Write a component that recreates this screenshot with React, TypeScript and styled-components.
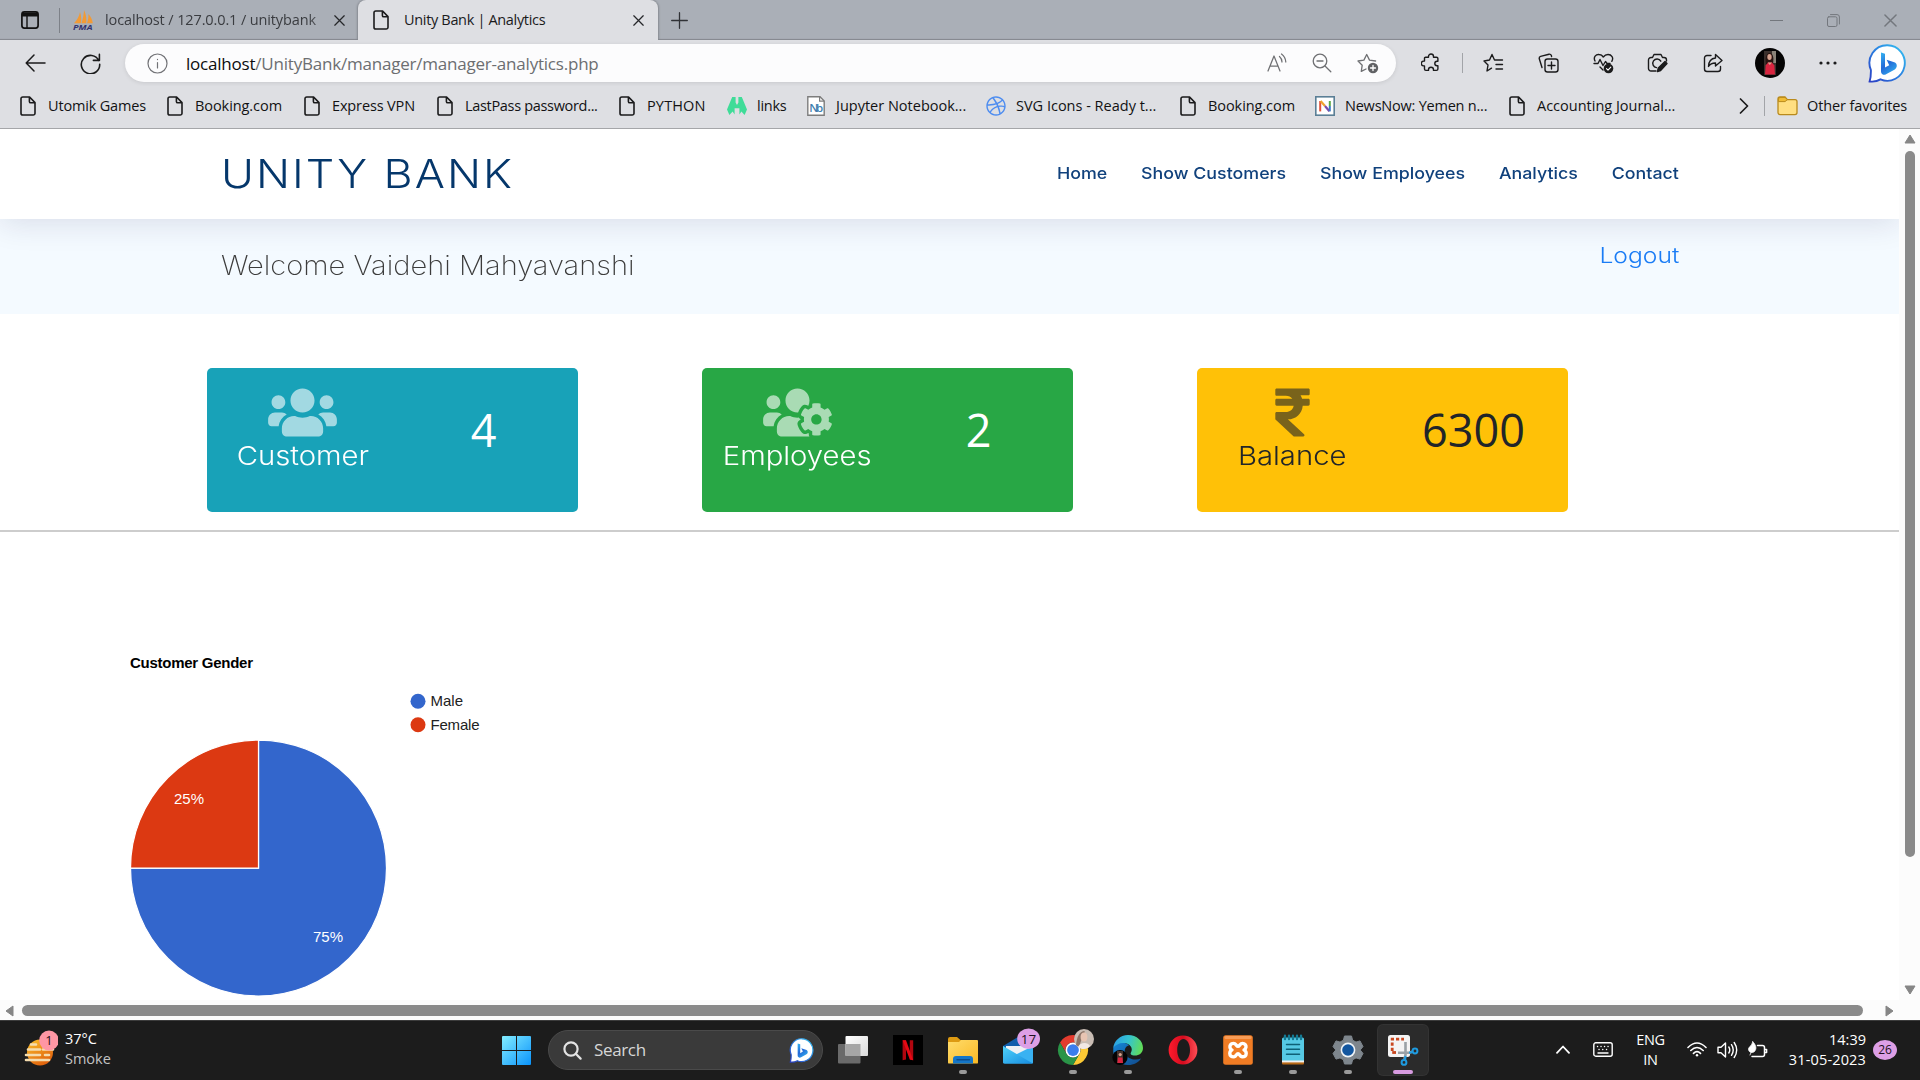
import React from "react";
import styled, { createGlobalStyle } from "styled-components";
import { FaUsers, FaUsersCog, FaRupeeSign, FaDribbble } from "react-icons/fa";

const Global = createGlobalStyle`
  * { box-sizing: border-box; }
  html, body { margin: 0; padding: 0; background: #fff; overflow: hidden; }
  svg { display: block; flex: none; }
`;

const ui = `"Open Sans", "Noto Sans", sans-serif`;
const brand = `Inter, "Open Sans", sans-serif`;

const Screen = styled.div`
  width: 1920px;
  height: 1080px;
  display: flex;
  flex-direction: column;
  overflow: hidden;
  font-family: ${ui};
`;

/* ---------- browser chrome ---------- */
const TabStrip = styled.div`
  height: 40px;
  display: flex;
  align-items: stretch;
  background: #aaafb7;
  box-shadow: inset 0 -2px 1px -1px #83878d;
`;
const StripStart = styled.div`
  width: 60px;
  padding: 0 0 0 21px;
  display: flex;
  align-items: center;
  justify-content: space-between;
`;
const StripRule = styled.i`
  width: 1px;
  height: 25px;
  background: #7d8188;
`;
const ToolRule = styled(StripRule)`
  height: 20px;
  background: #a2a4a8;
`;
const Tab = styled.div<{ $active?: boolean; $width: number }>`
  width: ${(p) => p.$width}px;
  padding: 0 ${(p) => (p.$active ? 14 : 13)}px 0 ${(p) => (p.$active ? 15 : 13)}px;
  display: flex;
  align-items: center;
  border-radius: 8px 8px 0 0;
  background: ${(p) => (p.$active ? "#dedfe3" : "transparent")};
  box-shadow: ${(p) => (p.$active ? "0 0 2px 1px #858990" : "none")};
  clip-path: ${(p) => (p.$active ? "inset(0 -3px 0 -3px)" : "none")};
`;
const TabTitle = styled.span<{ $active?: boolean }>`
  flex: 1;
  margin-left: ${(p) => (p.$active ? 15 : 11)}px;
  overflow: hidden;
  white-space: nowrap;
  font-size: 14.5px;
  line-height: 20px;
  letter-spacing: ${(p) => (p.$active ? -0.33 : -0.12)}px;
  color: ${(p) => (p.$active ? "#1b1b1c" : "#3a3c40")};
  mask-image: ${(p) => (p.$active ? "none" : "linear-gradient(90deg, #000 88%, rgba(0, 0, 0, 0.35))")};
`;
const StripEnd = styled.div`
  flex: 1;
  display: flex;
  align-items: center;
  padding: 0 23px 0 13px;
  gap: 44px;
`;
const Grow = styled.span`
  flex: 1;
`;
const Toolbar = styled.div`
  height: 46px;
  display: flex;
  align-items: center;
  background: #dedfe3;
`;
const NavButtons = styled.div`
  width: 125px;
  padding-left: 25px;
  display: flex;
  gap: 34px;
  align-items: center;
`;
const AddressBar = styled.div`
  width: 1271px;
  height: 38px;
  margin-right: 4px;
  padding: 0 17px 0 22px;
  display: flex;
  align-items: center;
  border-radius: 19px;
  background: #fcfcfd;
  box-shadow: 0 1px 4px rgba(0, 0, 0, 0.1);
`;
const Url = styled.span`
  flex: 1;
  margin-left: 18px;
  padding-top: 1px;
  font-size: 17px;
  line-height: 24px;
  letter-spacing: -0.21px;
  color: #6c6e71;
  b {
    font-weight: 400;
    color: #0c0c0d;
  }
`;
const AddressIcons = styled.div`
  display: flex;
  align-items: center;
  gap: 25px;
`;
const Actions = styled.div`
  flex: 1;
  display: flex;
  align-items: center;
`;
const Action = styled.span<{ $w: number }>`
  width: ${(p) => p.$w}px;
  display: flex;
  justify-content: center;
`;
const Bookmarks = styled.div`
  height: 43px;
  padding: 0 13px 3px 18px;
  display: flex;
  align-items: center;
  background: #dedfe3;
  border-bottom: 1px solid #a5a6a9;
`;
const Bookmark = styled.div<{ $w?: number; $ls: number }>`
  width: ${(p) => (p.$w ? `${p.$w}px` : "auto")};
  display: flex;
  align-items: center;
  gap: ${(p) => (p.$w ? 10 : 9)}px;
  white-space: nowrap;
  font-size: 14.5px;
  line-height: 20px;
  letter-spacing: ${(p) => p.$ls}px;
  color: #121213;
`;
const FolderLink = styled.div`
  margin-left: 12px;
`;
const IconSlot = styled.span`
  width: 20px;
  display: flex;
  justify-content: center;
`;

/* ---------- page ---------- */
const Window = styled.div`
  height: 891px;
  display: grid;
  grid-template-columns: 1899px 21px;
  grid-template-rows: 871px 20px;
  background: #fcfcfc;
`;
const Page = styled.main`
  background: #fff;
  overflow: hidden;
`;
const Header = styled.header`
  position: relative;
  z-index: 1;
  height: 90px;
  padding: 0 220px 0 221px;
  display: flex;
  align-items: center;
  justify-content: space-between;
  background: #fff;
  box-shadow: 0 5px 30px rgba(30, 26, 84, 0.12);
`;
const Logo = styled.h1`
  margin: 0;
  font-family: ${brand};
  font-size: 40px;
  line-height: 50px;
  font-weight: 300;
  letter-spacing: 1.8px;
  transform: scaleX(1.12);
  transform-origin: left;
  color: #05376b;
`;
const Nav = styled.nav`
  display: flex;
  gap: 31.3px;
  margin-bottom: 2px;
  font-family: ${brand};
  font-size: 16.5px;
  line-height: 24px;
  font-weight: 500;
  transform: scaleX(1.08);
  transform-origin: right;
  color: #10417c;
`;
const Band = styled.section`
  height: 95px;
  padding: 0 220px 0 221px;
  display: flex;
  justify-content: space-between;
  background: #f4faff;
  font-family: ${brand};
`;
const Welcome = styled.h2`
  margin: 27px 0 0;
  font-size: 27px;
  line-height: 40px;
  font-weight: 200;
  transform: scaleX(1.077);
  transform-origin: left;
  color: #3c3c3c;
`;
const Logout = styled.a`
  margin-top: 20px;
  font-size: 22px;
  line-height: 32px;
  font-weight: 300;
  transform: scaleX(1.12);
  transform-origin: right;
  color: #1a7cf5;
`;
const Cards = styled.section`
  margin-top: 54px;
  padding-left: 207px;
  display: flex;
  gap: 124px;
`;
const Card = styled.article<{ $bg: string; $fg: string }>`
  width: 371px;
  height: 144px;
  display: grid;
  grid-template-columns: 191px 171px;
  border-radius: 5px;
  background: ${(p) => p.$bg};
  color: ${(p) => p.$fg};
`;
const CardLabel = styled.div`
  padding-top: 17px;
  display: flex;
  flex-direction: column;
  align-items: center;
  font-family: ${brand};
  font-size: 26px;
  line-height: 31px;
  font-weight: 300;
  svg {
    width: 69px;
    height: 55px;
    opacity: 0.6;
  }
  span {
    transform: scaleX(1.125);
  }
`;
const CardValue = styled.div`
  padding-top: 31px;
  font-size: 45px;
  line-height: 61px;
  text-align: center;
`;
const Rule = styled.hr`
  margin: 18px 0 0;
  height: 2px;
  border: 0;
  background: #cdcdcd;
`;
const ChartArea = styled.section`
  padding: 98px 0 0 110px;
  font-family: "Liberation Sans", Arial, sans-serif;
`;
const VScroll = styled.div`
  display: flex;
  flex-direction: column;
  align-items: center;
  padding: 5px 0 5px 0;
`;
const VThumb = styled.div`
  width: 10px;
  height: 706px;
  margin: 7px 0 auto;
  border-radius: 5px;
  background: #8a8a8a;
`;
const HScroll = styled.div`
  display: flex;
  align-items: center;
  padding: 1px 5px 0 5px;
`;
const HThumb = styled.div`
  width: 1841px;
  height: 11px;
  margin: 0 auto 0 8px;
  border-radius: 6px;
  background: #8a8a8a;
`;

/* ---------- taskbar ---------- */
const Taskbar = styled.footer`
  height: 60px;
  padding-bottom: 1px;
  display: flex;
  align-items: center;
  background: #1c1c1c;
  border-top: 1px solid #3c3c3c;
  font-size: 14.5px;
  line-height: 20px;
  color: #fff;
`;
const Weather = styled.div`
  width: 502px;
  padding: 0 0 2px 23px;
  display: flex;
  align-items: center;
  gap: 7px;
`;
const Stack = styled.div<{ $align?: string; $ls?: number }>`
  display: flex;
  flex-direction: column;
  text-align: ${(p) => p.$align ?? "left"};
  letter-spacing: ${(p) => p.$ls ?? 0}px;
  small {
    font-size: 14.5px;
    color: #c3c3c3;
  }
`;
const SearchBox = styled.div`
  width: 275px;
  height: 40px;
  margin: 0 2px 0 17px;
  padding: 0 8px 0 14px;
  display: flex;
  align-items: center;
  border-radius: 20px;
  border: 1px solid #4a4a4a;
  background: #3a3a3a;
  font-size: 17px;
  line-height: 24px;
  letter-spacing: -0.35px;
  color: #d6d6d6;
  span {
    flex: 1;
    margin-left: 12px;
  }
`;
const Cell = styled.div<{ $active?: boolean }>`
  width: 50px;
  height: 50px;
  margin: 0 2.5px;
  padding: 7px 0 1px;
  display: flex;
  flex-direction: column;
  align-items: center;
  justify-content: space-between;
  border-radius: 5px;
  background: ${(p) => (p.$active ? "#2b2b2b" : "transparent")};
  box-shadow: ${(p) => (p.$active ? "0 0 0 1px #333" : "none")};
`;
const AppIcon = styled.span`
  height: 36px;
  margin-top: -3px;
`;
const Running = styled.i<{ $focus?: boolean }>`
  width: ${(p) => (p.$focus ? 20 : 8)}px;
  height: 4px;
  border-radius: 2px;
  background: ${(p) => (p.$focus ? "#d79be0" : "#9a9a9a")};
`;
const Tray = styled.div`
  flex: 1;
  padding: 0 23px 1px 0;
  display: flex;
  align-items: center;
  justify-content: flex-end;
`;
const TrayItem = styled.div<{ $mr: number }>`
  margin-right: ${(p) => p.$mr}px;
`;
const ClockDate = styled.span`
  letter-spacing: 0.15px;
`;
const Count = styled.span`
  width: 24px;
  height: 20px;
  border-radius: 12px / 10px;
  background: #dd9fe6;
  color: #1d1020;
  font-size: 12px;
  line-height: 20px;
  text-align: center;
`;

/* ---------- icons ---------- */
type LineProps = { w?: number; h?: number; box?: string; color?: string; sw?: number; children: React.ReactNode };
const Line = ({ w = 20, h = 20, box = "0 0 20 20", color = "#1b1b1c", sw = 1.4, children }: LineProps) => (
  <svg width={w} height={h} viewBox={box} fill="none" stroke={color} strokeWidth={sw} strokeLinecap="round" strokeLinejoin="round">
    {children}
  </svg>
);
const PageIcon = () => (
  <Line w={16} h={20} box="0 0 16 20" sw={1.6}>
    <path d="M2.8 1H9.6L15 6.6V17.2a1.8 1.8 0 0 1-1.8 1.8H2.8A1.8 1.8 0 0 1 1 17.2V2.8A1.8 1.8 0 0 1 2.8 1Z M9.4 1.2V5.4A1.4 1.4 0 0 0 10.8 6.8H14.8" />
  </Line>
);
const Cross = ({ s = 11, color = "#26272a" }: { s?: number; color?: string }) => (
  <Line w={s} h={s} box="0 0 11 11" color={color} sw={1.25}>
    <path d="M.8 .8 10.2 10.2M10.2 .8 .8 10.2" />
  </Line>
);
const Bing = ({ w, h }: { w: number; h: number }) => (
  <svg width={w} height={h} viewBox="0 0 38 39">
    <defs>
      <linearGradient id="bingEdge" x1="0" y1="1" x2="1" y2="0">
        <stop offset="0" stopColor="#2b3fc4" />
        <stop offset=".5" stopColor="#2a7fe0" />
        <stop offset="1" stopColor="#35c3f2" />
      </linearGradient>
      <linearGradient id="bingB" x1="0" y1="0" x2=".6" y2="1">
        <stop offset="0" stopColor="#34b5f1" />
        <stop offset=".55" stopColor="#2469d8" />
        <stop offset="1" stopColor="#2fa4ea" />
      </linearGradient>
    </defs>
    <path d="M19.5 1.2A17.5 17.8 0 1 1 12.5 35.4C9.5 37.3 5 37.9 1.6 37.5 2.6 34.5 3 31 2.9 26A17.6 17.8 0 0 1 19.5 1.2Z" fill="#fff" stroke="url(#bingEdge)" strokeWidth="1.9" />
    <path d="M13 8.4 17 9.8V23.6L21.2 21.2 18.6 15.8 27 18.6C29.6 20 29.2 24 26.8 25.4L17.6 30.6C15.6 31.4 13 30 13 27.4Z" fill="url(#bingB)" />
  </svg>
);
const Avatar = ({ w = 30, h = 30 }: { w?: number; h?: number }) => (
  <svg width={w} height={h} viewBox="0 0 30 30">
    <circle cx="15" cy="15" r="15" fill="#050404" />
    <rect x="9" y="3" width="12" height="24" fill="#3a302c" />
    <rect x="17" y="3" width="4" height="12" fill="#8a8378" />
    <path d="M11 16C10 10 11 5 14.5 5S19 9 18 16Z" fill="#281411" />
    <ellipse cx="14.5" cy="9" rx="2.2" ry="3" fill="#d6a28e" />
    <path d="M10 26.5 10.6 17.5 13 14.5H17L19.4 17.5 20 26.5Z" fill="#d92540" />
    <path d="M12.6 14.6 14.8 17 17 14.6Z" fill="#d6a28e" />
  </svg>
);
const Arrow = ({ d, w, h }: { d: string; w: number; h: number }) => (
  <svg width={w} height={h} viewBox={`0 0 ${w} ${h}`}>
    <path d={d} fill="#868686" stroke="#868686" strokeWidth="1" strokeLinejoin="round" />
  </svg>
);

const PmaIcon = () => (
  <svg width="21" height="20" viewBox="0 0 21 20">
    <path d="M1 13.2C4 10 6.400 6 7 2 8.400 6 8.600 10 7.800 13.200ZM8.400 13.200C10 9 10.800 4.600 11 0 13.200 4.400 13.800 9 13.200 13.200ZM14 13.200C15.200 10 15.600 7 15.400 4 17.800 6.600 19.400 9.800 19.800 13.200Z" fill="#f29a35" />
    <text x="0" y="19.8" fontFamily="Open Sans, sans-serif" fontSize="7.8" fontWeight="700" fontStyle="italic" fill="#33346f" textLength="19.500" lengthAdjust="spacingAndGlyphs">PMA</text>
  </svg>
);
const LinksIcon = () => (
  <svg width="20" height="18" viewBox="0 0 20 18">
    <path d="M5.2 0H8.6V5.4L10 8 11.4 5.4V0H14.8L20 12.4 17.6 18 14.4 14.6 12.4 17.4V11.2H7.6V17.4L5.6 14.6 2.4 18 0 12.4Z" fill="#3fdc98" />
  </svg>
);
const NbIcon = () => (
  <svg width="18" height="20" viewBox="0 0 18 20">
    <path d="M.8.8H13L17.2 5V19.2H.8Z" fill="#fff" stroke="#7d7d7d" strokeWidth="1.4" />
    <path d="M12.6.8V5.2H17.2" fill="none" stroke="#7d7d7d" strokeWidth="1.2" />
    <text x="2.2" y="15.8" fontFamily="Open Sans, sans-serif" fontSize="11.5" fontWeight="600" fill="#3f7fb0" textLength="14">Nb</text>
  </svg>
);
const NewsIcon = () => (
  <svg width="20" height="20" viewBox="0 0 20 20">
    <rect x=".8" y=".8" width="18.4" height="18.4" fill="#fff" stroke="#5b7f96" strokeWidth="1.6" />
    <path d="M5.2 5V15.4" stroke="#e0503a" strokeWidth="2" />
    <path d="M5.6 5 10 10" stroke="#efa22e" strokeWidth="2.2" />
    <path d="M10 10 14.4 15.2" stroke="#7b4aa8" strokeWidth="2.2" />
    <path d="M14.8 5V10" stroke="#5aa845" strokeWidth="2" />
    <path d="M14.8 10V15.4" stroke="#3a78c4" strokeWidth="2" />
  </svg>
);
const FolderIcon = () => (
  <svg width="21" height="20" viewBox="0 0 21 20">
    <path d="M1 3A2 2 0 0 1 3 1H8L10.4 3.6H18A2 2 0 0 1 20 5.6V16.6A2 2 0 0 1 18 18.6H3A2 2 0 0 1 1 16.6Z" fill="#ffdf82" stroke="#b98a1c" strokeWidth="1.3" />
    <path d="M1.4 5.6H8L10.4 3.6 8 1.4H3A2 2 0 0 0 1.4 3Z" fill="#f0bc35" stroke="#b98a1c" />
  </svg>
);

/* Taskbar application icons, all on a 30 unit canvas */
const App30 = ({ children }: { children: React.ReactNode }) => (
  <svg width="30" height="36" viewBox="0 -6 30 36" overflow="visible">{children}</svg>
);
const TaskViewIcon = () => (
  <App30>
    <defs>
      <linearGradient id="tv" x1="0" y1="0" x2="1" y2="1"><stop offset="0" stopColor="#fff" /><stop offset="1" stopColor="#dadada" /></linearGradient>
    </defs>
    <rect x="0" y="9" width="22.5" height="19.5" rx="1" fill="#6a6a6a" />
    <rect x="7.5" y="1" width="22.5" height="20" rx="1" fill="url(#tv)" />
    <rect x="7.5" y="9" width="15" height="12" fill="#a6a6a6" />
  </App30>
);
const NetflixIcon = () => (
  <App30>
    <rect width="30" height="30" fill="#000" />
    <path d="M9.6 5.2H13V24.6L9.6 25.2ZM16.8 5.2H20.2V25.2L16.8 24.6Z" fill="#b1060f" />
    <path d="M9.6 5.2H13L20.2 25.2 16.8 24.6Z" fill="#e50914" />
  </App30>
);
const ExplorerIcon = () => (
  <App30>
    <defs>
      <linearGradient id="fx" x1="0" y1="0" x2="1" y2="1"><stop offset="0" stopColor="#ffdc6b" /><stop offset="1" stopColor="#f9b925" /></linearGradient>
    </defs>
    <path d="M0 4A2 2 0 0 1 2 2H9L12.4 5H20V12H0Z" fill="#dd9a12" />
    <path d="M0 7H11L13 5H29A1 1 0 0 1 30 6V27.4A1.2 1.2 0 0 1 28.8 28.6H1.2A1.2 1.2 0 0 1 0 27.4Z" fill="url(#fx)" />
    <path d="M5 28.6V24A3 3 0 0 1 8 21H22A3 3 0 0 1 25 24V28.6Z" fill="#1476c8" />
    <path d="M9 24.8H21.4" stroke="#0c4d8d" strokeWidth="1.4" strokeLinecap="round" />
  </App30>
);
const MailIcon = () => (
  <App30>
    <defs>
      <linearGradient id="ml" x1="0" y1="0" x2="1" y2="1"><stop offset="0" stopColor="#50d3fa" /><stop offset="1" stopColor="#168be0" /></linearGradient>
    </defs>
    <path d="M0 11 15 2 30 11V16H0Z" fill="#115eac" />
    <path d="M3 11H28V15L15 21 3 14Z" fill="#eef1f4" />
    <path d="M30 11V27.6A1 1 0 0 1 29 28.6H1L12 20Z" fill="#39b2f2" />
    <path d="M0 11 30 28.6H1A1 1 0 0 1 0 27.6Z" fill="url(#ml)" />
    <ellipse cx="25.6" cy="3.8" rx="11.4" ry="10.2" fill="#dd9fe6" />
    <text x="25.6" y="8.6" fontFamily="Open Sans, sans-serif" fontSize="13.5" fill="#1d1020" textAnchor="middle">17</text>
  </App30>
);
const ChromeIcon = () => (
  <App30>
    <g transform="scale(.625)">
      <path d="M3.2 12A24 24 0 0 1 44.8 12H24A12 12 0 0 0 13.6 30Z" fill="#e33b2e" />
      <path d="M44.8 12A24 24 0 0 1 24 48L34.4 30A12 12 0 0 0 24 12Z" fill="#fcc934" />
      <path d="M24 48A24 24 0 0 1 3.2 12L13.6 30A12 12 0 0 0 34.4 30Z" fill="#2a9447" />
      <circle cx="24" cy="24" r="12" fill="#fff" />
      <circle cx="24" cy="24" r="9.4" fill="#3b7ded" />
    </g>
    <circle cx="26" cy="4" r="10" fill="#c9bdb4" />
    <path d="M18 10C19 2 21-3 26-4 28-5 25 2 23 6L21 12Z" fill="#8d7568" />
    <ellipse cx="26" cy="2" rx="3.4" ry="4.6" fill="#e8c4b2" />
    <path d="M20 12C22 7 30 7 32 11 29 14.6 24 15 20 12Z" fill="#f1e8e4" />
  </App30>
);
const EdgeIcon = () => (
  <App30>
    <defs>
      <linearGradient id="eg1" x1="0" y1=".3" x2="1" y2=".5"><stop offset="0" stopColor="#2b9fe6" /><stop offset=".5" stopColor="#35c4cf" /><stop offset="1" stopColor="#62dd56" /></linearGradient>
      <linearGradient id="eg2" x1="0" y1="0" x2="1" y2="1"><stop offset="0" stopColor="#1587d8" /><stop offset="1" stopColor="#114a8b" /></linearGradient>
    </defs>
    <path d="M.3 13C-1 24 7 30 15 30 21 30 25.500 27.500 28 23.500 22 26 14 24 12 18 11 14 13 11 16 10.500 10 5 3 8 .3 13Z" fill="url(#eg2)" />
    <path d="M.2 13C1 6 7 0 15 0 24 0 30 6 30 13 30 18 26 20.500 22 20.500 18 20.500 17 19 18 17.500 20.500 13 17 9 12 8 7 7.400 2.500 9.500 .2 13Z" fill="url(#eg1)" />
    <circle cx="7" cy="22.5" r="7.6" fill="#050404" />
    <rect x="4" y="16" width="6" height="12" fill="#43322d" />
    <path d="M4.400 28 5 22.500H9.400L10 28Z" fill="#d92540" />
    <circle cx="7.200" cy="19.600" r="1.600" fill="#d6a28e" />
  </App30>
);
const OperaIcon = () => (
  <App30>
    <defs>
      <linearGradient id="op" x1="0" y1="0" x2="1" y2="0"><stop offset="0" stopColor="#ff1b2d" /><stop offset=".5" stopColor="#d40b1e" /><stop offset="1" stopColor="#ff4d55" /></linearGradient>
    </defs>
    <path fillRule="evenodd" d="M15 .6A14.400 14.400 0 1 1 15 29.400 14.400 14.400 0 1 1 15 .6ZM15.400 4C11.500 4 9.200 9 9.200 15S11.500 26 15.400 26 22 21 22 15 19.300 4 15.400 4Z" fill="url(#op)" />
  </App30>
);
const XamppIcon = () => (
  <App30>
    <rect x=".2" y=".2" width="29.600" height="29.600" rx="2.500" fill="#f07c24" />
    <rect x="1.500" y="1" width="27" height="3" rx="1.500" fill="#fbb27a" opacity=".6" />
    <path d="M10.500 8.400C7.500 8.400 6.600 10.600 7 12.600 7.400 14.400 9 15 9 15S6.800 15.800 6.800 18.400 8.600 22 11 21.800C13.400 21.600 13.400 18.600 15 18.600S16.800 21.600 19 21.800C21.600 22 23.200 20.800 23.200 18.400S21 15 21 15 22.800 14.200 23 12.200 22 8.400 19.500 8.400C17 8.400 16.600 11.400 15 11.400S13 8.400 10.500 8.400Z" fill="none" stroke="#fff" strokeWidth="3.400" strokeLinejoin="round" />
  </App30>
);
const NotepadIcon = () => (
  <App30>
    <rect x="4" y="25" width="22" height="4.600" rx="1" fill="#b96a16" />
    <rect x="4" y="24" width="22" height="3.400" fill="#f2f2f2" />
    <path d="M4 4A1.500 1.500 0 0 1 5.500 2.500H24.500A1.500 1.500 0 0 1 26 4V25.400H4Z" fill="#56c9e4" />
    <path d="M7 .8V4M11 .8V4M15 .8V4M19 .8V4M23 .8V4" stroke="#137a94" strokeWidth="2.400" strokeLinecap="round" />
    <path d="M8.500 9.500H21.500M8.500 14.300H21.500M8.500 19.200H21.500" stroke="#0e6076" strokeWidth="1.500" strokeLinecap="round" />
  </App30>
);
const SettingsIcon = () => (
  <App30>
    <path d="M11.500 1H18.500L19.600 5.200 23 7.100 27 5.900 30 11.600 27.200 15 30 18.400 27 24.100 23 22.900 19.600 24.800 18.500 29H11.500L10.400 24.800 7 22.900 3 24.100 0 18.400 2.800 15 0 11.600 3 5.900 7 7.100 10.400 5.200Z" fill="#7e868d" stroke="#7e868d" strokeLinejoin="round" />
    <circle cx="15" cy="15" r="7.400" fill="#f0f4f7" />
    <circle cx="15" cy="15" r="5.800" fill="#12569f" />
  </App30>
);
const SnipIcon = () => (
  <App30>
    <rect x="0" y="0" width="22" height="22" rx="2.500" fill="#f4f4f4" />
    <path d="M4.200 16V4.200H16" fill="none" stroke="#c9471f" strokeWidth="2.800" strokeDasharray="3.200 2" />
    <path d="M4.200 17.500H8" stroke="#c9471f" strokeWidth="2.800" />
    <path d="M17.500 7V20L16.400 24M10 17.800H21L25 16.600" fill="none" stroke="#9aa1a6" strokeWidth="2.600" />
    <circle cx="27" cy="16" r="2.400" fill="none" stroke="#1e9be0" strokeWidth="2" />
    <circle cx="16" cy="27.400" r="2.400" fill="none" stroke="#1e9be0" strokeWidth="2" />
    <path d="M17.500 21 17 25M21 17.800 24.600 17" stroke="#1e9be0" strokeWidth="2.200" />
  </App30>
);

/* ---------- data ---------- */
const bookmarks = [
  { t: "Utomik Games", w: 147, ls: -0.17, i: <PageIcon /> },
  { t: "Booking.com", w: 137, ls: -0.07, i: <PageIcon /> },
  { t: "Express VPN", w: 133, ls: -0.14, i: <PageIcon /> },
  { t: "LastPass password...", w: 182, ls: -0.32, i: <PageIcon /> },
  { t: "PYTHON", w: 110, ls: 0.15, i: <PageIcon /> },
  { t: "links", w: 79, ls: -0.25, i: <LinksIcon /> },
  { t: "Jupyter Notebook...", w: 180, ls: 0, i: <NbIcon /> },
  { t: "SVG Icons - Ready t...", w: 192, ls: 0, i: <FaDribbble size={20} color="#4e8df0" /> },
  { t: "Booking.com", w: 137, ls: -0.07, i: <PageIcon /> },
  { t: "NewsNow: Yemen n...", w: 192, ls: -0.22, i: <NewsIcon /> },
  { t: "Accounting Journal...", w: 232, ls: 0, i: <PageIcon /> },
];
const links = ["Home", "Show Customers", "Show Employees", "Analytics", "Contact"];
const stats = [
  { t: "Customer", v: "4", bg: "#18a2b8", fg: "#fff", i: <FaUsers /> },
  { t: "Employees", v: "2", bg: "#28a745", fg: "#fff", i: <FaUsersCog /> },
  { t: "Balance", v: "6300", bg: "#ffc107", fg: "#212529", i: <FaRupeeSign /> },
];
const apps = [
  { i: <TaskViewIcon /> },
  { i: <NetflixIcon /> },
  { i: <ExplorerIcon />, run: true },
  { i: <MailIcon /> },
  { i: <ChromeIcon />, run: true },
  { i: <EdgeIcon />, run: true },
  { i: <OperaIcon /> },
  { i: <XamppIcon />, run: true },
  { i: <NotepadIcon />, run: true },
  { i: <SettingsIcon />, run: true },
  { i: <SnipIcon />, run: true, focus: true },
];

const GenderChart = () => (
  <svg width="400" height="372" viewBox="0 0 400 372">
    <text x="20" y="38" fontSize="15" fontWeight="700" fill="#000" textLength="123">Customer Gender</text>
    <circle cx="308" cy="71.200" r="7.500" fill="#3366cc" />
    <circle cx="308" cy="94.700" r="7.500" fill="#dc3912" />
    <g fontSize="15" fill="#222">
      <text x="320.500" y="76.300">Male</text>
      <text x="320.500" y="100" textLength="49">Female</text>
    </g>
    <path d="M148.500 238V110A128 128 0 1 1 20.500 238Z" fill="#3366cc" stroke="#fff" strokeWidth="1.250" />
    <path d="M148.500 238H20.500A128 128 0 0 1 148.500 110Z" fill="#dc3912" stroke="#fff" strokeWidth="1.250" />
    <g fontSize="15" fill="#fff">
      <text x="64" y="174">25%</text>
      <text x="203" y="312">75%</text>
    </g>
  </svg>
);

export default function App() {
  return (
    <Screen>
      <Global />
      <TabStrip>
        <StripStart>
          <svg width="18" height="18" viewBox="0 0 18 18">
            <rect x=".9" y=".9" width="16.200" height="16.200" rx="2.500" fill="none" stroke="#111" strokeWidth="1.700" />
            <path d="M1 1.500H17V5.500H1Z" fill="#111" />
            <path d="M6 5V17" stroke="#111" strokeWidth="1.400" />
          </svg>
          <StripRule />
        </StripStart>
        <Tab $width={298}>
          <PmaIcon />
          <TabTitle>localhost / 127.0.0.1 / unitybank</TabTitle>
          <Cross />
        </Tab>
        <Tab $active $width={300}>
          <PageIcon />
          <TabTitle $active>Unity Bank | Analytics</TabTitle>
          <Cross />
        </Tab>
        <StripEnd>
          <Line w={17} h={17} box="0 0 17 17" color="#303236" sw={1.3}>
            <path d="M8.500 .7V16.300M.7 8.500H16.300" />
          </Line>
          <Grow />
          <Line w={13} h={13} box="0 0 13 13" color="#73777d" sw={1}>
            <path d="M0 6.500H13" />
          </Line>
          <Line w={13} h={13} box="0 0 13 13" color="#73777d" sw={1}>
            <path d="M1.500 2.800H8.500A1.500 1.500 0 0 1 10 4.300V11A1.500 1.500 0 0 1 8.500 12.500H2A1.500 1.500 0 0 1 .5 11V4.300A1.500 1.500 0 0 1 2 2.800M3.500 .6H10A2.400 2.400 0 0 1 12.400 3V10" />
          </Line>
          <Cross s={13} color="#73777d" />
        </StripEnd>
      </TabStrip>

      <Toolbar>
        <NavButtons>
          <Line w={21} h={18} box="0 0 21 18" sw={1.5}>
            <path d="M20 9H1.200M9 1 1.200 9 9 17" />
          </Line>
          <Line w={21} h={21} box="0 0 21 21" sw={1.6}>
            <path d="M18.800 7.600A9.200 9.200 0 1 0 19.700 11.200M19.400 1.400V7.400H13.400" />
          </Line>
        </NavButtons>
        <AddressBar>
          <Line w={21} h={21} box="0 0 21 21" color="#717276" sw={1.2}>
            <circle cx="10.500" cy="10.500" r="9.500" />
            <path d="M10.500 9.500V15M10.500 6.300V6.600" />
          </Line>
          <Url>
            <b>localhost</b>/UnityBank/manager/manager-analytics.php
          </Url>
          <AddressIcons>
            <Line color="#6f7073" sw={1.25}>
              <path d="M1 18 7 3 13 18M3 13H11M12.500 3.500Q14.800 5.500 15 9M14.500 1Q18.500 4 18.800 9" />
            </Line>
            <Line color="#6f7073" sw={1.3}>
              <circle cx="8" cy="8" r="6.800" />
              <path d="M13 13 18.800 18.800M5 8H11" />
            </Line>
            <Line w={22} h={21} box="0 0 22 21" color="#6f7073" sw={1.3}>
              <path d="M9 16 4.300 18.400 5.200 12.200 1 8 6.900 7.100 9.700 1.500 12.500 7.100 18.600 8" />
              <circle cx="16" cy="15" r="5.200" fill="#606164" stroke="none" />
              <path d="M16 12.500V17.500M13.500 15H18.500" stroke="#fff" />
            </Line>
          </AddressIcons>
        </AddressBar>
        <Actions>
          <Action $w={62}>
            <Line>
              <path d="M4.500 4.200H7.500V3.500A2.500 2.500 0 0 1 12.500 3.500V4.200H15.500A1.400 1.400 0 0 1 16.900 5.600V8.300H16A2.200 2.200 0 0 0 16 12.700H16.900V16A1.400 1.400 0 0 1 15.500 17.400H12.500V16.800A2.500 2.500 0 0 0 7.500 16.800V17.400H4.900A1.400 1.400 0 0 1 3.500 16V12.900H2.700A2.400 2.400 0 0 1 2.700 8.100H3.500V5.200A1 1 0 0 1 4.500 4.200Z" />
            </Line>
          </Action>
          <ToolRule />
          <Action $w={60}>
            <Line w={21} h={20} box="0 0 21 20">
              <path d="M8.500 15.200 4 18 5 12 1 8 6.500 7 9 1.500 11.500 7H19.500M13 11.500H19.500M13 16H19.500" />
            </Line>
          </Action>
          <Action $w={50}>
            <Line w={21} h={20} box="0 0 21 20">
              <rect x="7" y="6" width="13" height="13" rx="2.500" />
              <path d="M13.500 9V16M10 12.500H17M4 14.500 1.200 5.500A2 2 0 0 1 2.600 3.400L11 1.200A2 2 0 0 1 13.400 2.800L13.600 3.500" />
            </Line>
          </Action>
          <Action $w={60}>
            <Line w={21} h={21} box="0 0 21 21">
              <path d="M10 17 7 14M2 8C0 4 3 1.200 6 1.500 8 1.600 9.400 2.600 10.300 4 11.500 2.400 13 1.500 15 1.500 18.500 1.500 21 4.600 18.800 8.300M1 10.500H5L7 6.500 10 12.500 12.500 8.500 14 10.500H17" />
              <circle cx="15.500" cy="15.500" r="4.800" fill="#1b1b1c" stroke="none" />
              <path d="M13.500 15.700 15 17.200 17.800 14.200" stroke="#fff" strokeWidth="1.100" />
            </Line>
          </Action>
          <Action $w={49}>
            <Line w={21} h={20} box="0 0 21 20">
              <path d="M9 18H4A2.500 2.500 0 0 1 1.500 15.500V7A2.500 2.500 0 0 1 4 4.500H5.500L7 1.500H14L15.500 4.500H17A2.500 2.500 0 0 1 19.500 7V8M13.800 8.200A4.300 4.300 0 1 0 9.500 14.600" />
              <path d="M10.500 18.500 11.300 15 18 8.600 20 10.600 13.600 17.500Z" fill="#1b1b1c" />
            </Line>
          </Action>
          <Action $w={62}>
            <Line>
              <path d="M8 2.500H4A2.500 2.500 0 0 0 1.500 5V16A2.500 2.500 0 0 0 4 18.500H15A2.500 2.500 0 0 0 17.500 16V13.500M12.500 1.500 19 7.500 12.500 13V10C9 10 7 11 5.500 13.500 5.700 8.500 8.500 5.400 12.500 5Z" />
            </Line>
          </Action>
          <Action $w={52}>
            <Avatar />
          </Action>
          <Action $w={63}>
            <svg width="18" height="4" viewBox="0 0 18 4" fill="#1b1b1c">
              <circle cx="2" cy="2" r="1.600" />
              <circle cx="9" cy="2" r="1.600" />
              <circle cx="16" cy="2" r="1.600" />
            </svg>
          </Action>
          <Action $w={56}>
            <Bing w={38} h={39} />
          </Action>
        </Actions>
      </Toolbar>

      <Bookmarks>
        {bookmarks.map((b, n) => (
          <Bookmark key={n} $w={b.w} $ls={b.ls}>
            <IconSlot>{b.i}</IconSlot>
            {b.t}
          </Bookmark>
        ))}
        <Line w={10} h={16} box="0 0 10 16" sw={1.7}>
          <path d="M1.500 1 8.500 8 1.500 15" />
        </Line>
        <Grow />
        <ToolRule />
        <FolderLink>
          <Bookmark $ls={-0.13}>
            <FolderIcon />
            Other favorites
          </Bookmark>
        </FolderLink>
      </Bookmarks>

      <Window>
        <Page>
          <Header>
            <Logo>UNITY BANK</Logo>
            <Nav>
              {links.map((l) => (
                <a key={l}>{l}</a>
              ))}
            </Nav>
          </Header>
          <Band>
            <Welcome>Welcome Vaidehi Mahyavanshi</Welcome>
            <Logout>Logout</Logout>
          </Band>
          <Cards>
            {stats.map((s) => (
              <Card key={s.t} $bg={s.bg} $fg={s.fg}>
                <CardLabel>
                  {s.i}
                  <span>{s.t}</span>
                </CardLabel>
                <CardValue>{s.v}</CardValue>
              </Card>
            ))}
          </Cards>
          <Rule />
          <ChartArea>
            <GenderChart />
          </ChartArea>
        </Page>
        <VScroll>
          <Arrow w={12} h={10} d="M6 1 11 9H1Z" />
          <VThumb />
          <Arrow w={12} h={10} d="M6 9 11 1H1Z" />
        </VScroll>
        <HScroll>
          <Arrow w={9} h={12} d="M1 6 8 1V11Z" />
          <HThumb />
          <Arrow w={9} h={12} d="M8 6 1 1V11Z" />
        </HScroll>
      </Window>

      <Taskbar>
        <Weather>
          <svg width="35" height="38" viewBox="0 0 35 38">
            <defs>
              <linearGradient id="sun" x1="0" y1="0" x2=".6" y2="1">
                <stop offset="0" stopColor="#fbc02a" />
                <stop offset="1" stopColor="#e0620d" />
              </linearGradient>
            </defs>
            <ellipse cx="17" cy="22.500" rx="13" ry="13" fill="url(#sun)" />
            <path d="M8 14.500H13M5 19.500H17M20 19.500H30M3 25H17M22 25H26M3 30H26" stroke="#f4dcae" strokeWidth="2.600" strokeLinecap="round" />
            <ellipse cx="26" cy="10.500" rx="9.800" ry="10" fill="#ff96a4" />
            <text x="26" y="15.400" fontFamily="Open Sans, sans-serif" fontSize="13" fill="#2a1014" textAnchor="middle">1</text>
          </svg>
          <Stack>
            <span>37°C</span>
            <small>Smoke</small>
          </Stack>
        </Weather>
        <svg width="29" height="29" viewBox="0 0 29 29">
          <defs>
            <linearGradient id="win" x1="0" y1="0" x2="1" y2="1">
              <stop offset="0" stopColor="#83edff" />
              <stop offset="1" stopColor="#0a93fb" />
            </linearGradient>
          </defs>
          <path d="M1 0H14V14H0V1A1 1 0 0 1 1 0ZM15 0H28A1 1 0 0 1 29 1V14H15ZM0 15H14V29H1A1 1 0 0 1 0 28ZM15 15H29V28A1 1 0 0 1 28 29H15Z" fill="url(#win)" />
        </svg>
        <SearchBox>
          <Line w={19} h={19} box="0 0 19 19" color="#e3e3e3" sw={2.2}>
            <circle cx="8" cy="8" r="6.600" />
            <path d="M13 13 17.600 17.600" />
          </Line>
          <span>Search</span>
          <Bing w={25} h={25} />
        </SearchBox>
        {apps.map((a, n) => (
          <Cell key={n} $active={a.focus}>
            <AppIcon>{a.i}</AppIcon>
            {a.run && <Running $focus={a.focus} />}
          </Cell>
        ))}
        <Tray>
          <TrayItem $mr={23}>
            <Line w={14} h={9} box="0 0 14 9" color="#fff" sw={1.8}>
              <path d="M1 7.800 7 1.500 13 7.800" />
            </Line>
          </TrayItem>
          <TrayItem $mr={23}>
            <Line w={20} h={15} box="0 0 20 15" color="#fff" sw={1.4}>
              <rect x=".8" y=".8" width="18.400" height="13.400" rx="2" />
              <path d="M4.500 4.500H4.600M8 4.500H8.100M11.500 4.500H11.600M15 4.500H15.100M6 7.500H6.100M9.700 7.500H9.800M13.500 7.500H13.600M5 11H15" />
            </Line>
          </TrayItem>
          <TrayItem $mr={22}>
            <Stack $align="center" $ls={-0.3}>
              <span>ENG</span>
              <span>IN</span>
            </Stack>
          </TrayItem>
          <TrayItem $mr={10}>
            <Line w={20} h={15} box="0 0 20 15" color="#fff" sw={1.6}>
              <path d="M1 5.500Q10-3.500 19 5.500M3.800 8.500Q10 2.500 16.200 8.500M6.500 11.400Q10 8 13.500 11.400" />
              <circle cx="10" cy="13.200" r="1.200" fill="#fff" stroke="none" />
            </Line>
          </TrayItem>
          <TrayItem $mr={9}>
            <Line w={21} h={18} box="0 0 21 18" color="#fff" sw={1.4}>
              <path d="M1 6.200H4L8.500 2V16L4 11.800H1ZM11.800 6Q13.800 9 11.800 12M14.500 3.700Q18 9 14.500 14.300M17.200 1.500Q22.200 9 17.200 16.500" />
            </Line>
          </TrayItem>
          <TrayItem $mr={21}>
            <Line w={21} h={17} box="0 0 21 17" color="#fff" sw={1.5}>
              <path d="M10.500 4.500H15.500A2 2 0 0 1 17.500 6.500V13.500A2 2 0 0 1 15.500 15.500H5M17.800 8.500H19.600V11.500H17.800" />
              <path d="M5.800 .8C9 4 10 7.500 7.500 10.500 5 12.500 2 11.500 1.500 8.500 1.300 6 5 5 5.800 .8ZM3 14 5 9.500" fill="#fff" strokeWidth=".8" />
            </Line>
          </TrayItem>
          <TrayItem $mr={7}>
            <Stack $align="right">
              <span>14:39</span>
              <ClockDate>31-05-2023</ClockDate>
            </Stack>
          </TrayItem>
          <Count>26</Count>
        </Tray>
      </Taskbar>
    </Screen>
  );
}
